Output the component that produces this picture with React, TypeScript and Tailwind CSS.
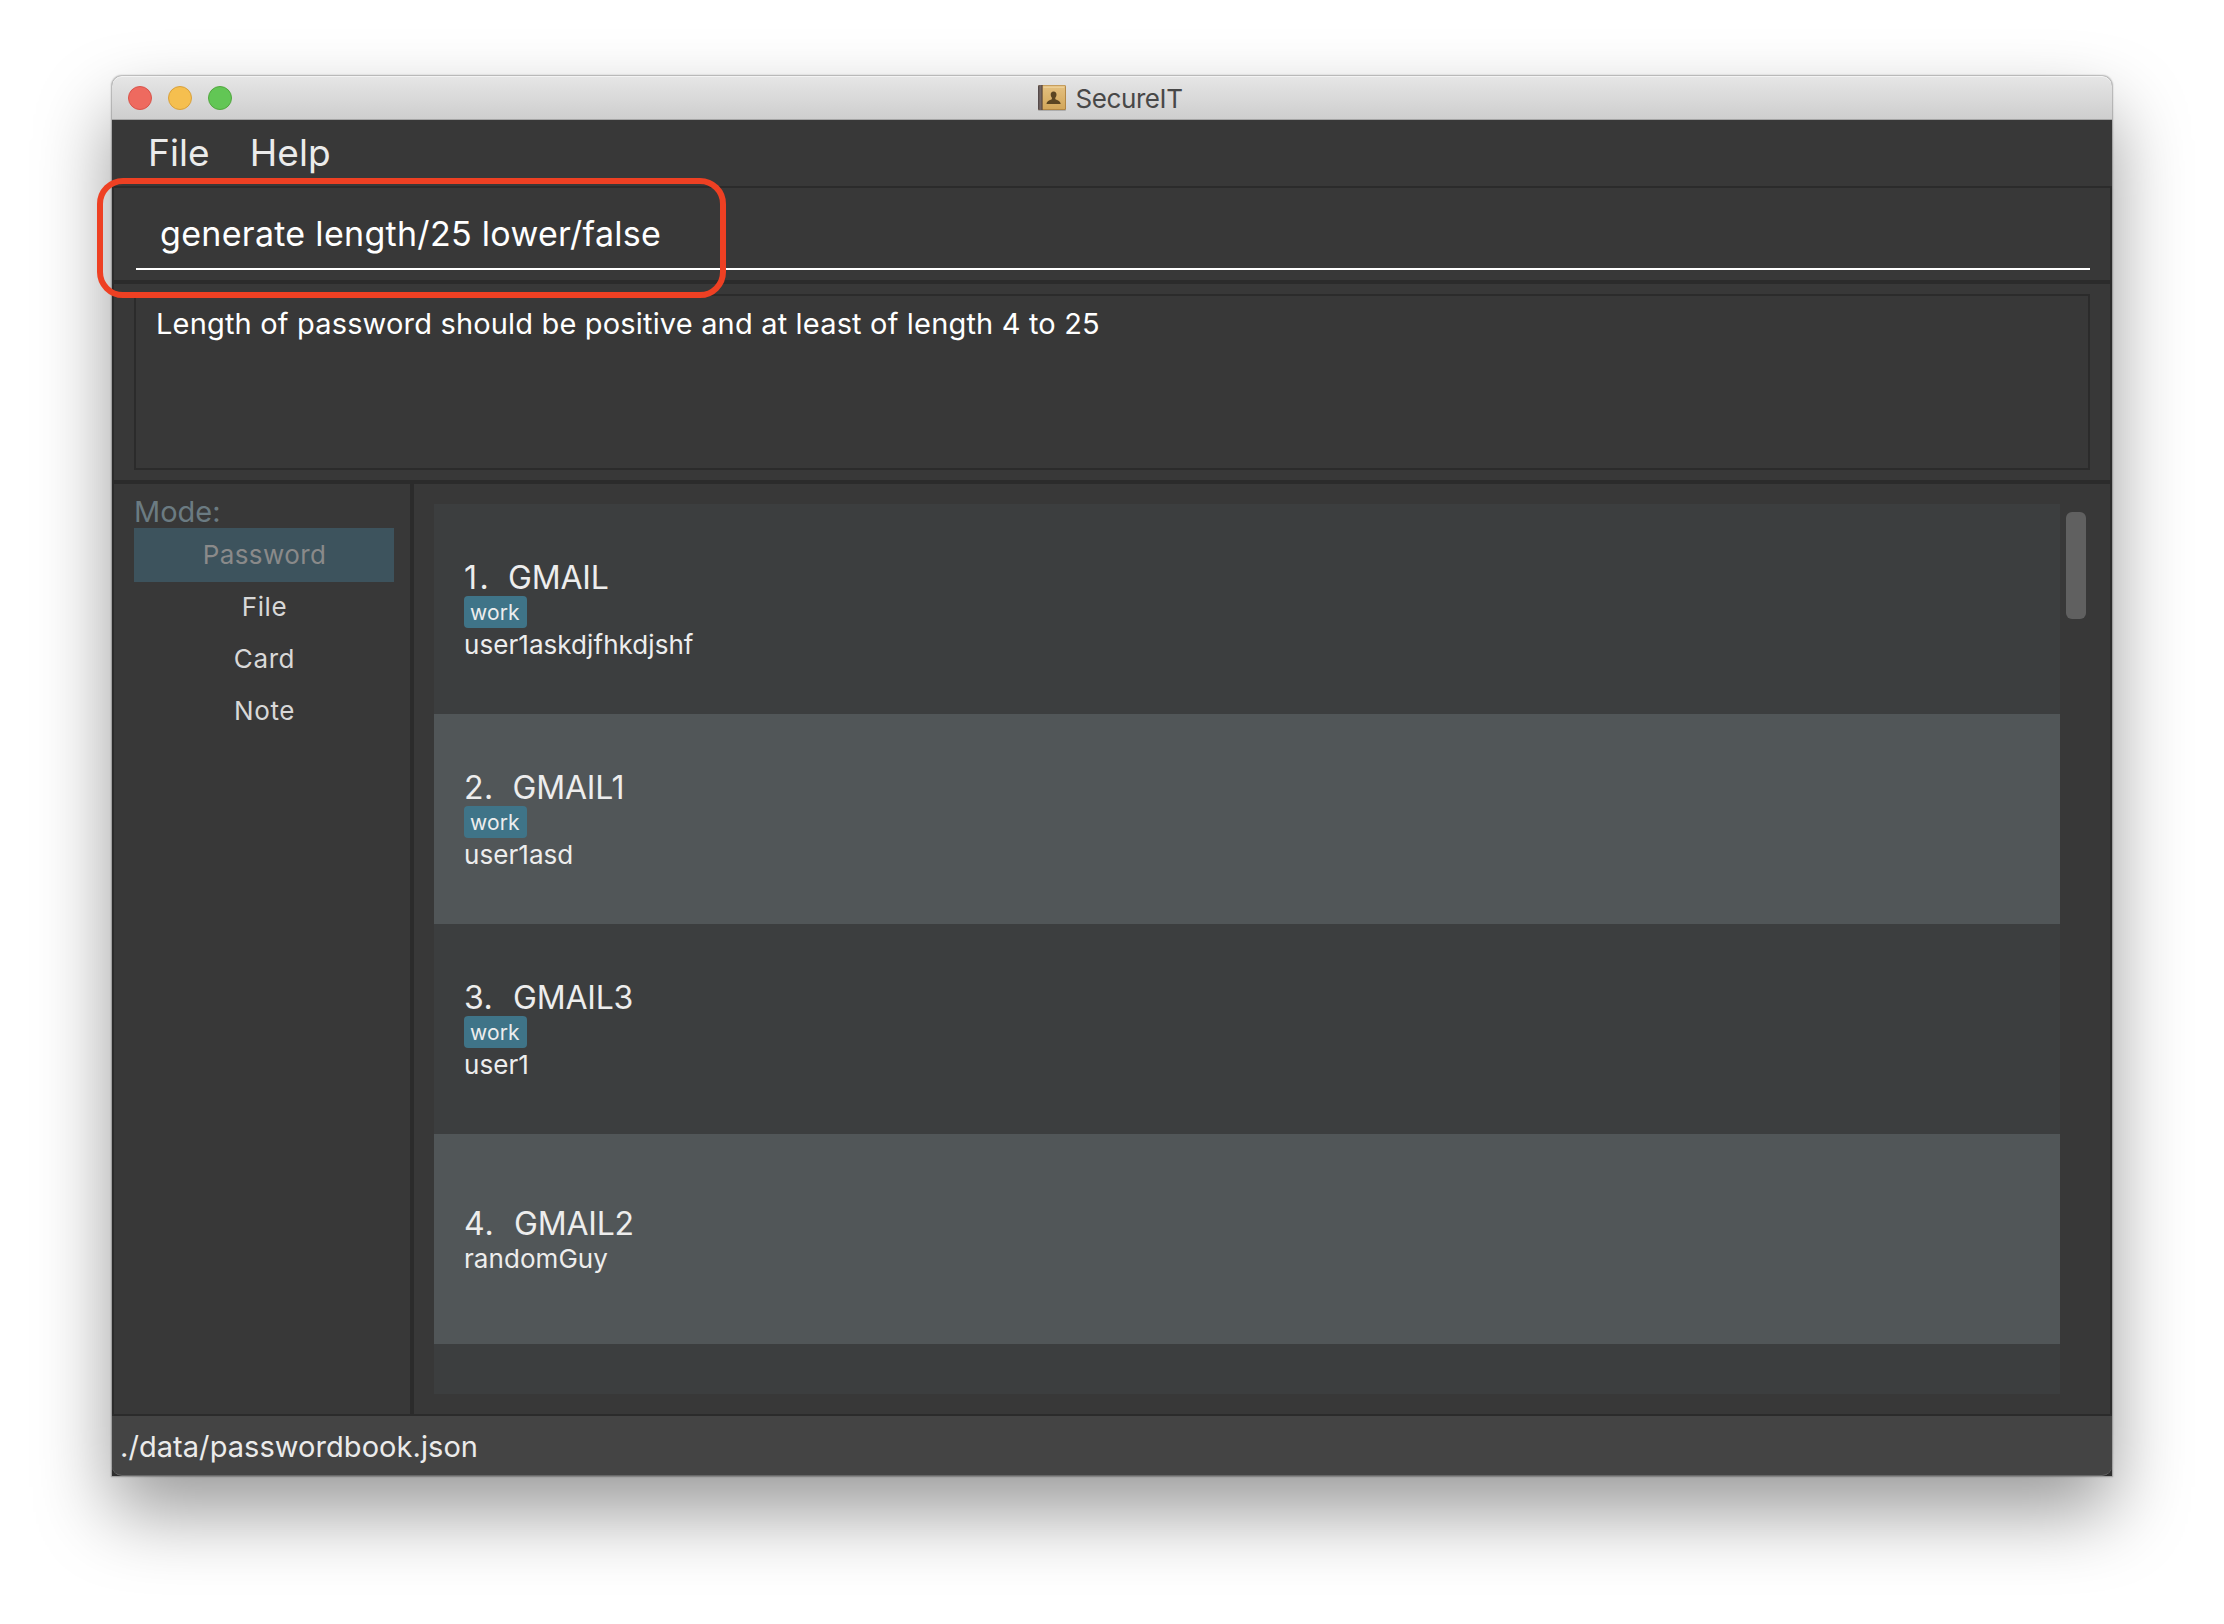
import React from 'react';

type Entry = {
  index: string;
  name: string;
  user: string;
  tag?: string;
  indexClass: string;
};

const entries: Entry[] = [
  { index: '1.', name: 'GMAIL', user: 'user1askdjfhkdjshf', tag: 'work', indexClass: 'w-[44px] tracking-[2.5px]' },
  { index: '2.', name: 'GMAIL1', user: 'user1asd', tag: 'work', indexClass: 'w-[48.5px] tracking-[0.5px]' },
  { index: '3.', name: 'GMAIL3', user: 'user1', tag: 'work', indexClass: 'w-[49px] tracking-[0.5px]' },
  { index: '4.', name: 'GMAIL2', user: 'randomGuy', indexClass: 'w-[50px] tracking-[1px]' },
];

const modes = ['File', 'Card', 'Note'];

function BookIcon() {
  return (
    <svg className="h-[28px] w-[30px] shrink-0" viewBox="0 0 30 28">
      <defs>
        <linearGradient id="cover" x1="0" y1="0" x2="0" y2="1">
          <stop offset="0" stopColor="#e4c07f" />
          <stop offset="1" stopColor="#d2a65a" />
        </linearGradient>
        <linearGradient id="spine" x1="0" y1="0" x2="1" y2="0">
          <stop offset="0" stopColor="#4a4040" />
          <stop offset="0.5" stopColor="#7a6c69" />
          <stop offset="1" stopColor="#51423c" />
        </linearGradient>
      </defs>
      <rect x="1" y="25" width="28" height="2" rx="1" fill="#000" opacity="0.18" />
      <rect x="1" y="1" width="28" height="25" rx="1.5" fill="#a87c3c" />
      <rect x="5.5" y="1.6" width="22.7" height="23.6" rx="0.8" fill="url(#cover)" />
      <path d="M1 2.5Q1 1 2.5 1H5.5V26H2.5Q1 26 1 24.5Z" fill="url(#spine)" />
      <path d="M6.5 3.2H27.2" stroke="#f4dca8" strokeWidth="0.8" />
      <path
        d="M16.6 7.6c2 0 3 1.3 2.9 3.2-.1 1.4-.6 2.3-1.2 3v1.5c1.900 1 4.9 1.100 5.400 4.800H9.500c.5-3.700 3.500-3.800 5.400-4.800v-1.500c-.6-.7-1.100-1.600-1.200-3-.1-1.900.9-3.200 2.900-3.200z"
        fill="#5b4522"
      />
    </svg>
  );
}

function TitleBar() {
  return (
    <header className="relative flex h-[44px] items-center justify-center rounded-t-[10px] border-b border-[#a5a5a5] bg-linear-to-b from-[#e6e6e6] to-[#cecece] shadow-[inset_0_1px_0_#f3f3f3]">
      <div className="absolute top-[10px] left-[16px] flex gap-[16px]">
        <span className="size-[24px] rounded-full border border-[#d9544b] bg-[#ee6a5f]" />
        <span className="size-[24px] rounded-full border border-[#d9a13c] bg-[#f5bf4f]" />
        <span className="size-[24px] rounded-full border border-[#52a73f] bg-[#62c655]" />
      </div>
      <div className="flex items-center gap-[8px] pr-[4px]">
        <BookIcon />
        <span className="pt-[2px] text-[26px] leading-[42px] tracking-[-0.4px] text-[#484848]">SecureIT</span>
      </div>
    </header>
  );
}

function EntryRow({ entry }: { entry: Entry }) {
  return (
    <li
      className={
        'flex h-[210px] shrink-0 flex-col items-start pl-[30px] text-[#ededed] odd:bg-[#3c3e3f] even:bg-[#515658] ' +
        (entry.tag ? 'pt-[54px]' : 'pt-[70px]')
      }
    >
      <div className="flex h-[38px] text-[32px] leading-[40px]">
        <span className={entry.indexClass}>{entry.index}</span>
        <span className="tracking-[-0.2px]">{entry.name}</span>
      </div>
      {entry.tag && (
        <span className="h-[32px] w-[63px] rounded-[4px] bg-[#3f7488] pl-[6px] text-[21px] leading-[34px] tracking-[0.15px]">
          {entry.tag}
        </span>
      )}
      <span className="h-[33px] text-[26px] leading-[33px] tracking-[0.06px]">{entry.user}</span>
    </li>
  );
}

export default function App() {
  return (
    <div className="h-[1624px] w-[2224px] overflow-hidden bg-white px-[112px] pt-[76px] font-[Inter,sans-serif]">
      <div className="relative flex h-[1400px] w-[2000px] flex-col rounded-t-[10px] bg-[#383838] shadow-[0_36px_76px_rgba(0,0,0,0.4),0_0_1.5px_1px_rgba(0,0,0,0.28)]">
        <TitleBar />
        <nav className="flex h-[66px] gap-[40px] pl-[36px] text-[37px] leading-[66px] tracking-[0.1px] text-[#ebebeb]">
          <span>File</span>
          <span>Help</span>
        </nav>

        <main className="flex h-[1230px] flex-col border-2 border-[#2b2b2b]">
          <div className="h-[92px] shrink-0 px-[20px]">
            <div className="ml-[2px] h-[82px] border-b-2 border-white pt-[26px] pl-[24px] text-[34px] leading-[40px] tracking-[0.3px] text-white">
              generate length/25 lower/false
            </div>
          </div>
          <div className="h-[204px] shrink-0 border-y-4 border-[#2b2b2b] px-[20px] pt-[10px]">
            <div className="h-[176px] border-2 border-[#2b2b2b] pt-[10px] pl-[20px] text-[29px] leading-[36px] tracking-[0.17px] text-white">
              Length of password should be positive and at least of length 4 to 25
            </div>
          </div>
          <div className="flex min-h-0 flex-1">
            <aside className="w-[300px] shrink-0 border-r-4 border-[#2b2b2b] px-[20px] pt-[10px]">
              <div className="h-[34px] text-[29px] leading-[36px] text-[#6b7b82]">Mode:</div>
              <div className="mb-[-1px] h-[54px] w-[260px] bg-[#3d535d] pl-[1px] text-center text-[26px] leading-[54px] tracking-[0.4px] text-[#8a8a8a]">
                Password
              </div>
              {modes.map((mode) => (
                <div
                  key={mode}
                  className="h-[52px] w-[260px] pl-[1px] text-center text-[26px] leading-[52px] tracking-[0.6px] text-[#d8d8d8]"
                >
                  {mode}
                </div>
              ))}
            </aside>
            <section className="flex flex-1 gap-[6px] py-[20px] pl-[20px]">
              <ul className="flex h-[890px] w-[1626px] flex-col overflow-hidden bg-[#3c3e3f]">
                {entries.map((entry) => (
                  <EntryRow key={entry.index} entry={entry} />
                ))}
              </ul>
              <div className="mt-[8px] h-[107px] w-[20px] rounded-[6px] bg-[#606060]" />
            </section>
          </div>
        </main>

        <div className="h-[60px] bg-[#2f2f2f]">
          <footer className="h-[60px] rounded-b-[10px] border-b border-[#686868] bg-[#444444] pl-[8px] text-[29px] leading-[62px] tracking-[0.06px] text-[#ebebeb]">
            ./data/passwordbook.json
          </footer>
        </div>

        <div className="pointer-events-none absolute top-[102px] left-[-15px] h-[120px] w-[629px] rounded-[26px] border-[6px] border-[#ee4023]" />
      </div>
    </div>
  );
}
